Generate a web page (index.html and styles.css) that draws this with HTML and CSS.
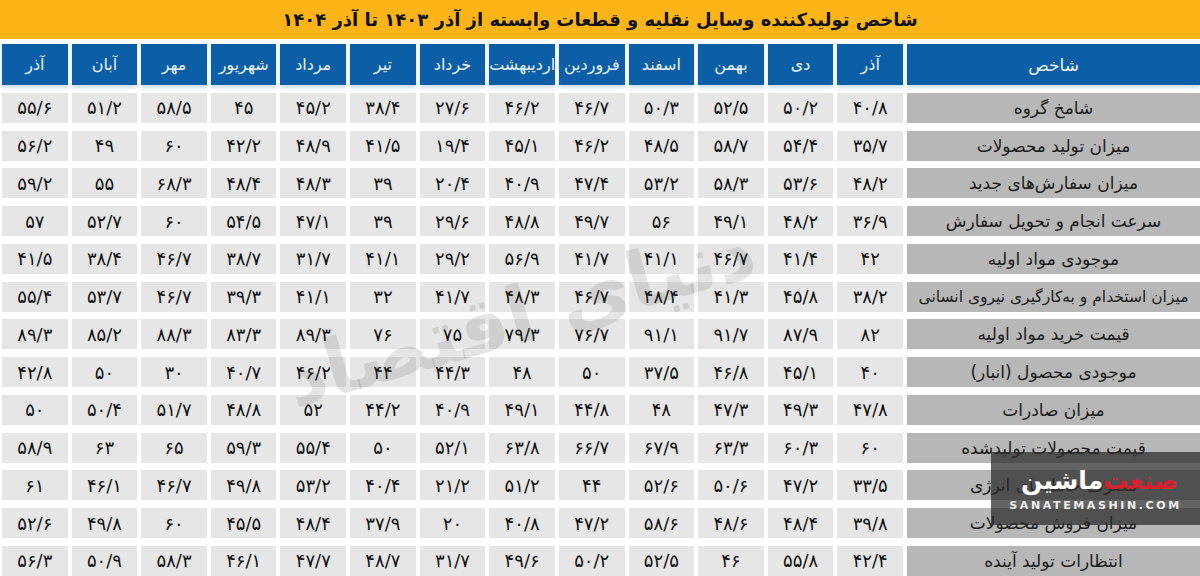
FILE: index.html
```html
<!DOCTYPE html>
<html lang="fa" dir="rtl">
<head>
<meta charset="utf-8">
<title>شاخص تولیدکننده وسایل نقلیه</title>
<link rel="stylesheet" href="styles.css">
</head>
<body>
<div class="page">
  <div class="title">شاخص تولیدکننده وسایل نقلیه و قطعات وابسته از آذر ۱۴۰۳ تا آذر ۱۴۰۴</div>
  <div class="table">
    <div class="cell head label">شاخص</div>
    <div class="cell head">آذر</div><div class="cell head">دی</div><div class="cell head">بهمن</div><div class="cell head">اسفند</div><div class="cell head">فروردین</div><div class="cell head">اردیبهشت</div><div class="cell head">خرداد</div><div class="cell head">تیر</div><div class="cell head">مرداد</div><div class="cell head">شهریور</div><div class="cell head">مهر</div><div class="cell head">آبان</div><div class="cell head">آذر</div>

    <div class="cell label">شامخ گروه</div>
    <div class="cell">۴۰/۸</div><div class="cell">۵۰/۲</div><div class="cell">۵۲/۵</div><div class="cell">۵۰/۳</div><div class="cell">۴۶/۷</div><div class="cell">۴۶/۲</div><div class="cell">۲۷/۶</div><div class="cell">۳۸/۴</div><div class="cell">۴۵/۲</div><div class="cell">۴۵</div><div class="cell">۵۸/۵</div><div class="cell">۵۱/۲</div><div class="cell">۵۵/۶</div>

    <div class="cell label">میزان تولید محصولات</div>
    <div class="cell">۳۵/۷</div><div class="cell">۵۴/۴</div><div class="cell">۵۸/۷</div><div class="cell">۴۸/۵</div><div class="cell">۴۶/۲</div><div class="cell">۴۵/۱</div><div class="cell">۱۹/۴</div><div class="cell">۴۱/۵</div><div class="cell">۴۸/۹</div><div class="cell">۴۲/۲</div><div class="cell">۶۰</div><div class="cell">۴۹</div><div class="cell">۵۶/۲</div>

    <div class="cell label">میزان سفارش‌های جدید</div>
    <div class="cell">۴۸/۲</div><div class="cell">۵۳/۶</div><div class="cell">۵۸/۳</div><div class="cell">۵۳/۲</div><div class="cell">۴۷/۴</div><div class="cell">۴۰/۹</div><div class="cell">۲۰/۴</div><div class="cell">۳۹</div><div class="cell">۴۸/۳</div><div class="cell">۴۸/۴</div><div class="cell">۶۸/۳</div><div class="cell">۵۵</div><div class="cell">۵۹/۲</div>

    <div class="cell label">سرعت انجام و تحویل سفارش</div>
    <div class="cell">۳۶/۹</div><div class="cell">۴۸/۲</div><div class="cell">۴۹/۱</div><div class="cell">۵۶</div><div class="cell">۴۹/۷</div><div class="cell">۴۸/۸</div><div class="cell">۲۹/۶</div><div class="cell">۳۹</div><div class="cell">۴۷/۱</div><div class="cell">۵۴/۵</div><div class="cell">۶۰</div><div class="cell">۵۲/۷</div><div class="cell">۵۷</div>

    <div class="cell label">موجودی مواد اولیه</div>
    <div class="cell">۴۲</div><div class="cell">۴۱/۴</div><div class="cell">۴۶/۷</div><div class="cell">۴۱/۱</div><div class="cell">۴۱/۷</div><div class="cell">۵۶/۹</div><div class="cell">۲۹/۲</div><div class="cell">۴۱/۱</div><div class="cell">۳۱/۷</div><div class="cell">۳۸/۷</div><div class="cell">۴۶/۷</div><div class="cell">۳۸/۴</div><div class="cell">۴۱/۵</div>

    <div class="cell label long">میزان استخدام  و به‌کارگیری نیروی انسانی</div>
    <div class="cell">۳۸/۲</div><div class="cell">۴۵/۸</div><div class="cell">۴۱/۳</div><div class="cell">۴۸/۴</div><div class="cell">۴۶/۷</div><div class="cell">۴۸/۳</div><div class="cell">۴۱/۷</div><div class="cell">۳۲</div><div class="cell">۴۱/۱</div><div class="cell">۳۹/۳</div><div class="cell">۴۶/۷</div><div class="cell">۵۳/۷</div><div class="cell">۵۵/۴</div>

    <div class="cell label">قیمت خرید مواد اولیه</div>
    <div class="cell">۸۲</div><div class="cell">۸۷/۹</div><div class="cell">۹۱/۷</div><div class="cell">۹۱/۱</div><div class="cell">۷۶/۷</div><div class="cell">۷۹/۳</div><div class="cell">۷۵</div><div class="cell">۷۶</div><div class="cell">۸۹/۳</div><div class="cell">۸۳/۳</div><div class="cell">۸۸/۳</div><div class="cell">۸۵/۲</div><div class="cell">۸۹/۳</div>

    <div class="cell label">موجودی محصول (انبار)</div>
    <div class="cell">۴۰</div><div class="cell">۴۵/۱</div><div class="cell">۴۶/۸</div><div class="cell">۳۷/۵</div><div class="cell">۵۰</div><div class="cell">۴۸</div><div class="cell">۴۴/۳</div><div class="cell">۴۴</div><div class="cell">۴۶/۲</div><div class="cell">۴۰/۷</div><div class="cell">۳۰</div><div class="cell">۵۰</div><div class="cell">۴۲/۸</div>

    <div class="cell label">میزان صادرات</div>
    <div class="cell">۴۷/۸</div><div class="cell">۴۹/۳</div><div class="cell">۴۷/۳</div><div class="cell">۴۸</div><div class="cell">۴۴/۸</div><div class="cell">۴۹/۱</div><div class="cell">۴۰/۹</div><div class="cell">۴۴/۲</div><div class="cell">۵۲</div><div class="cell">۴۸/۸</div><div class="cell">۵۱/۷</div><div class="cell">۵۰/۴</div><div class="cell">۵۰</div>

    <div class="cell label">قیمت محصولات تولیدشده</div>
    <div class="cell">۶۰</div><div class="cell">۶۰/۳</div><div class="cell">۶۳/۳</div><div class="cell">۶۷/۹</div><div class="cell">۶۶/۷</div><div class="cell">۶۳/۸</div><div class="cell">۵۲/۱</div><div class="cell">۵۰</div><div class="cell">۵۵/۴</div><div class="cell">۵۹/۳</div><div class="cell">۶۵</div><div class="cell">۶۳</div><div class="cell">۵۸/۹</div>

    <div class="cell label">مصرف حامل‌های انرژی</div>
    <div class="cell">۳۳/۵</div><div class="cell">۴۷/۲</div><div class="cell">۵۰/۶</div><div class="cell">۵۲/۶</div><div class="cell">۴۴</div><div class="cell">۵۱/۲</div><div class="cell">۲۱/۲</div><div class="cell">۴۰/۴</div><div class="cell">۵۳/۲</div><div class="cell">۴۹/۸</div><div class="cell">۴۶/۷</div><div class="cell">۴۶/۱</div><div class="cell">۶۱</div>

    <div class="cell label">میزان فروش محصولات</div>
    <div class="cell">۳۹/۸</div><div class="cell">۴۸/۴</div><div class="cell">۴۸/۶</div><div class="cell">۵۸/۶</div><div class="cell">۴۷/۲</div><div class="cell">۴۰/۸</div><div class="cell">۲۰</div><div class="cell">۳۷/۹</div><div class="cell">۴۸/۴</div><div class="cell">۴۵/۵</div><div class="cell">۶۰</div><div class="cell">۴۹/۸</div><div class="cell">۵۲/۶</div>

    <div class="cell label">انتظارات تولید آینده</div>
    <div class="cell">۴۲/۴</div><div class="cell">۵۵/۸</div><div class="cell">۴۶</div><div class="cell">۵۲/۵</div><div class="cell">۵۰/۲</div><div class="cell">۴۹/۶</div><div class="cell">۳۱/۷</div><div class="cell">۴۸/۷</div><div class="cell">۴۷/۷</div><div class="cell">۴۶/۱</div><div class="cell">۵۸/۳</div><div class="cell">۵۰/۹</div><div class="cell">۵۶/۳</div>
  </div>

  <div class="watermark">دنیای اقتصاد</div>

  <div class="logo">
    <div class="logo-fa"><span class="red">صنعت</span><span class="white">ماشین</span></div>
    <div class="logo-en">SANATEMASHIN.COM</div>
  </div>
</div>
</body>
</html>
```

FILE: styles.css
```css
html, body {
  margin: 0;
  padding: 0;
  background: #ffffff;
}

.page {
  position: relative;
  width: 1200px;
  height: 576px;
  overflow: hidden;
  background: #ffffff;
  direction: rtl;
  font-family: "DejaVu Sans", sans-serif;
  color: #151515;
}

.title {
  height: 39px;
  line-height: 39px;
  background: #fcb416;
  text-align: center;
  font-size: 18px;
  font-weight: bold;
  color: #111;
  margin-bottom: 5px;
}

.table {
  display: grid;
  grid-template-columns: 293px repeat(13, 1fr);
  grid-template-rows: 41px repeat(13, 30px);
  column-gap: 4px;
  row-gap: 7.75px;
  padding-left: 2px;
}

.cell {
  display: flex;
  align-items: center;
  justify-content: center;
  background: #e6e6e6;
  font-size: 18px;
  white-space: nowrap;
  overflow: hidden;
  color: #111;
}

.cell.label {
  background: #b7b7b7;
  font-size: 17px;
  color: #1b1b1b;
}

.cell.label.long {
  font-size: 15.5px;
}

.cell.head {
  background: #0c5ea6;
  color: #e6f3ff;
  font-size: 16px;
  box-shadow: 0 3px 3px rgba(120, 170, 210, 0.35);
}

.cell.head.label {
  font-size: 17px;
}

.watermark {
  position: absolute;
  left: 240px;
  top: 270px;
  width: 560px;
  text-align: center;
  white-space: nowrap;
  font-size: 78px;
  font-weight: bold;
  color: rgba(70, 70, 70, 0.14);
  transform: rotate(-16deg);
  pointer-events: none;
}

.logo {
  position: absolute;
  right: 0;
  top: 452px;
  width: 209px;
  height: 73px;
  background: rgba(45, 45, 45, 0.74);
  display: flex;
  flex-direction: column;
  align-items: center;
  justify-content: center;
  gap: 3px;
}

.logo-fa {
  font-size: 25px;
  font-weight: bold;
  line-height: 30px;
  display: flex;
  direction: rtl;
  margin-left: 8px;
}

.logo-fa .red {
  color: #d5212e;
}

.logo-fa .white {
  color: #ffffff;
}

.logo-en {
  direction: ltr;
  font-family: "DejaVu Sans", sans-serif;
  font-size: 11px;
  font-weight: bold;
  letter-spacing: 2.6px;
  color: #f0f0f0;
}
```
